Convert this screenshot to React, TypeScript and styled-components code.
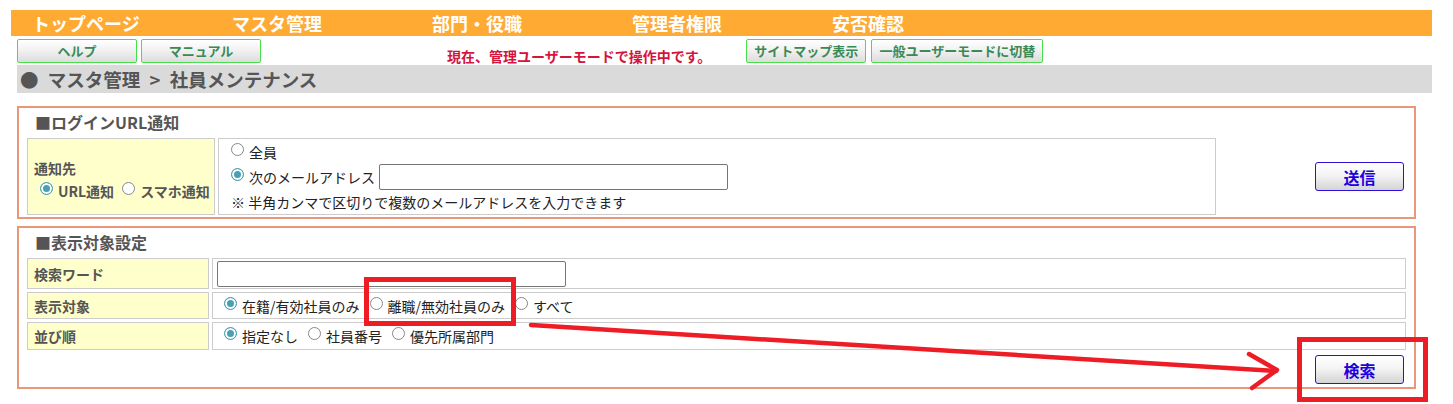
import React from "react";
import styled, { createGlobalStyle } from "styled-components";

const GlobalStyle = createGlobalStyle`
  html, body {
    margin: 0;
    padding: 0;
    background: #fff;
    overflow: hidden;
  }
  body {
    font-family: "Noto Sans CJK JP", "Noto Sans", sans-serif;
    color: #222;
  }
  * {
    box-sizing: border-box;
  }
`;

const Page = styled.div`
  position: relative;
  width: 1453px;
  height: 404px;
  padding: 10px 0 0 11px;
`;

const NavBar = styled.nav`
  display: grid;
  grid-template-columns: repeat(5, 200px) 1fr;
  width: 1421px;
  height: 26px;
  background: #ffaa33;
`;

const NavItem = styled.div`
  padding-left: 21px;
  color: #fff;
  font-size: 18px;
  font-weight: bold;
  line-height: 26px;
  white-space: nowrap;
`;

const Body = styled.div`
  margin-left: 6px;
  width: 1415px;
`;

const ToolRow = styled.div`
  display: flex;
  align-items: center;
  height: 24px;
  margin-top: 3px;
`;

const ToolButton = styled.button<{ $w: number; $ml?: number }>`
  width: ${(p) => p.$w}px;
  height: 24px;
  margin-left: ${(p) => p.$ml ?? 0}px;
  padding: 0;
  border: 1px solid #48e048;
  border-radius: 2px;
  background: linear-gradient(#ffffff, #f2f2f2 45%, #dcdcdc);
  color: #3a8a55;
  font-family: inherit;
  font-size: 13px;
  font-weight: bold;
  line-height: 20px;
  white-space: nowrap;
`;

const ModeNotice = styled.div`
  margin: 10px 0 0 186px;
  color: #d4143c;
  font-size: 14px;
  font-weight: bold;
  line-height: 16px;
  white-space: nowrap;
`;

const Crumb = styled.div`
  display: flex;
  align-items: center;
  height: 28px;
  margin-top: 2px;
  padding-left: 3px;
  background: #dadada;
  color: #555;
  font-size: 18.5px;
  font-weight: bold;
  white-space: pre;
`;

const Panel = styled.section<{ $mt: number }>`
  width: 1399px;
  margin-top: ${(p) => p.$mt}px;
  padding: 0 8px 2px 8px;
  border: 2px solid #e9967a;
`;

const PanelTitle = styled.h3`
  margin: 0;
  height: 30px;
  padding-left: 8px;
  color: #555;
  font-size: 16px;
  font-weight: bold;
  line-height: 28px;
`;

const NotifyRow = styled.div`
  display: flex;
  align-items: center;
`;

const Grid = styled.div<{ $cols: string }>`
  display: grid;
  grid-template-columns: ${(p) => p.$cols};
  gap: 3px;
`;

const LabelCell = styled.div<{ $h: number }>`
  display: flex;
  flex-direction: column;
  justify-content: center;
  min-height: ${(p) => p.$h}px;
  padding-left: 6px;
  background: #ffffcc;
  border: 1px solid #cccccc;
  color: #555;
  font-size: 14px;
  font-weight: bold;
`;

const ValueCell = styled.div<{ $h: number; $pl: number }>`
  display: flex;
  flex-direction: column;
  justify-content: center;
  min-height: ${(p) => p.$h}px;
  padding-left: ${(p) => p.$pl}px;
  background: #fff;
  border: 1px solid #cccccc;
  font-size: 14px;
`;

const Line = styled.div`
  display: flex;
  align-items: center;
  height: 25px;
  white-space: nowrap;
`;

const Choice = styled.label<{ $gap?: number }>`
  display: inline-flex;
  align-items: center;
  margin-right: ${(p) => p.$gap ?? 10}px;
  white-space: nowrap;
`;

const Radio = styled.input.attrs({ type: "radio" })`
  appearance: none;
  width: 13px;
  height: 13px;
  margin: -5px 5px 0 0;
  border: 1px solid #888;
  border-radius: 50%;
  background: #fff;
  flex: none;
  &:checked {
    border-color: #4a9fb1;
    background: #4a9fb1;
    box-shadow: inset 0 0 0 2px #fff;
  }
`;

const TextBox = styled.input.attrs({ type: "text" })<{ $w: number }>`
  width: ${(p) => p.$w}px;
  height: 26px;
  border: 1px solid #767676;
  border-radius: 2px;
  padding: 0 4px;
  font-family: inherit;
`;

const Note = styled.span`
  color: #222;
`;

const SubmitButton = styled.button`
  width: 89px;
  height: 29px;
  padding: 0;
  border: 1px solid #2a10d8;
  border-radius: 3px;
  background: linear-gradient(#ffffff, #f4f4f4 45%, #d4d4d4);
  color: #2200dd;
  font-family: inherit;
  font-size: 16px;
  font-weight: bold;
`;

const SideAction = styled.div`
  flex: 1;
  display: flex;
  justify-content: flex-end;
  padding-right: 2px;
`;

const FootAction = styled.div`
  display: flex;
  justify-content: flex-end;
  padding: 5px 2px 1px 0;
`;

const Overlay = styled.svg`
  position: absolute;
  left: 0;
  top: 0;
  pointer-events: none;
`;

const navItems = ["トップページ", "マスタ管理", "部門・役職", "管理者権限", "安否確認"];

export default function App() {
  return (
    <>
      <GlobalStyle />
      <Page>
        <NavBar>
          {navItems.map((n) => (
            <NavItem key={n}>{n}</NavItem>
          ))}
        </NavBar>
        <Body>
          <ToolRow>
            <ToolButton $w={120}>ヘルプ</ToolButton>
            <ToolButton $w={120} $ml={4}>マニュアル</ToolButton>
            <ModeNotice>現在、管理ユーザーモードで操作中です。</ModeNotice>
            <ToolButton $w={120} $ml={35}>サイトマップ表示</ToolButton>
            <ToolButton $w={172} $ml={5}>一般ユーザーモードに切替</ToolButton>
          </ToolRow>
          <Crumb>{"●\u2002マスタ管理\u2002>\u2002社員メンテナンス"}</Crumb>

          <Panel $mt={13}>
            <PanelTitle>■ログインURL通知</PanelTitle>
            <NotifyRow>
              <Grid $cols="188px 998px">
                <LabelCell $h={77}>
                  <div style={{ paddingTop: 8 }}>通知先</div>
                  <Line>
                    <Choice $gap={8}>
                      <Radio name="to" defaultChecked style={{ marginLeft: 6 }} />
                      URL通知
                    </Choice>
                    <Choice $gap={0}>
                      <Radio name="to" />
                      スマホ通知
                    </Choice>
                  </Line>
                </LabelCell>
                <ValueCell $h={77} $pl={12}>
                  <Line>
                    <Choice>
                      <Radio name="dest" />
                      全員
                    </Choice>
                  </Line>
                  <Line>
                    <Choice $gap={4}>
                      <Radio name="dest" defaultChecked />
                      次のメールアドレス
                    </Choice>
                    <TextBox $w={349} />
                  </Line>
                  <Line>
                    <Note>※ 半角カンマで区切りで複数のメールアドレスを入力できます</Note>
                  </Line>
                </ValueCell>
              </Grid>
              <SideAction>
                <SubmitButton>送信</SubmitButton>
              </SideAction>
            </NotifyRow>
          </Panel>

          <Panel $mt={7}>
            <PanelTitle>■表示対象設定</PanelTitle>
            <Grid $cols="182px 1194px">
              <LabelCell $h={31}>検索ワード</LabelCell>
              <ValueCell $h={31} $pl={4}>
                <TextBox $w={349} />
              </ValueCell>
              <LabelCell $h={27}>表示対象</LabelCell>
              <ValueCell $h={27} $pl={11}>
                <Line>
                  <Choice>
                    <Radio name="scope" defaultChecked />
                    在籍/有効社員のみ
                  </Choice>
                  <Choice>
                    <Radio name="scope" />
                    離職/無効社員のみ
                  </Choice>
                  <Choice>
                    <Radio name="scope" />
                    すべて
                  </Choice>
                </Line>
              </ValueCell>
              <LabelCell $h={28}>並び順</LabelCell>
              <ValueCell $h={28} $pl={11}>
                <Line>
                  <Choice>
                    <Radio name="order" defaultChecked />
                    指定なし
                  </Choice>
                  <Choice>
                    <Radio name="order" />
                    社員番号
                  </Choice>
                  <Choice>
                    <Radio name="order" />
                    優先所属部門
                  </Choice>
                </Line>
              </ValueCell>
            </Grid>
            <FootAction>
              <SubmitButton>検索</SubmitButton>
            </FootAction>
          </Panel>
        </Body>

        <Overlay width={1453} height={404} viewBox="0 0 1453 404">
          <g fill="none" stroke="#ee1c24" strokeWidth={5}>
            <rect x={366.5} y={279.5} width={147} height={44} />
            <rect x={1299.5} y={339.5} width={126} height={60} />
          </g>
          <g fill="none" stroke="#ee1c24" strokeWidth={4.5} strokeLinecap="round" strokeLinejoin="round">
            <line x1={531} y1={325} x2={1276} y2={371} />
            <polyline points="1249,354 1277,370 1252,388" />
          </g>
        </Overlay>
      </Page>
    </>
  );
}
